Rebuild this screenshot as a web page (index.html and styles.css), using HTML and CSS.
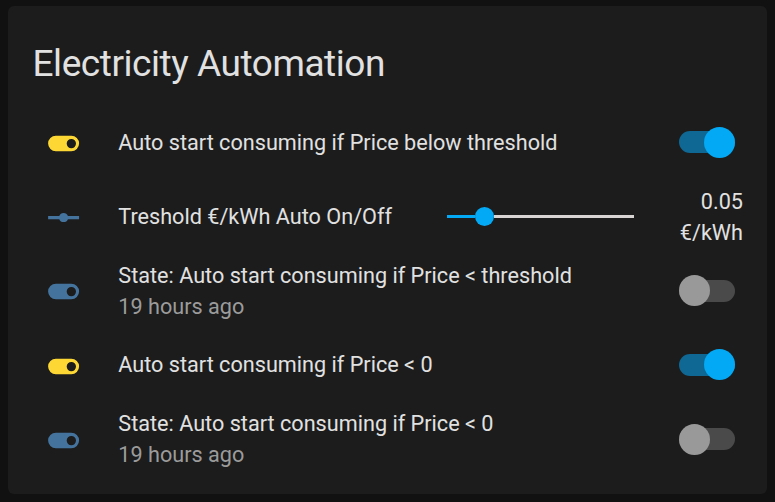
FILE: index.html
```html
<!DOCTYPE html>
<html lang="en">
<head>
<meta charset="utf-8">
<title>Electricity Automation</title>
<link rel="stylesheet" href="styles.css">
</head>
<body>
<svg width="0" height="0" class="defs">
  <symbol id="toggle" viewBox="0 0 24 24"><path d="M17 7H7a5 5 0 0 0 0 10h10a5 5 0 0 0 0-10m0 8a3 3 0 1 1 0-6 3 3 0 0 1 0 6"/></symbol>
  <symbol id="ray" viewBox="0 0 24 24"><path d="M2 11h7.2a3 3 0 0 1 5.6 0H22v2h-7.2a3 3 0 0 1-5.6 0H2z"/></symbol>
</svg>
<main class="card">
  <h1 class="title">Electricity Automation</h1>
  <div class="rows">
    <div class="row">
      <svg class="icon on"><use href="#toggle"/></svg>
      <div class="name">Auto start consuming if Price below threshold</div>
      <div class="switch on"><i class="knob"></i></div>
    </div>
    <div class="row">
      <svg class="icon"><use href="#ray"/></svg>
      <div class="name">Treshold €/kWh Auto On/Off</div>
      <div class="slider"><i class="fill"></i><i class="thumb"></i><i class="rest"></i></div>
      <div class="value">0.05<br>€/kWh</div>
    </div>
    <div class="row">
      <svg class="icon"><use href="#toggle"/></svg>
      <div class="name">State: Auto start consuming if Price &lt; threshold<div class="ago">19 hours ago</div></div>
      <div class="switch"><i class="knob"></i></div>
    </div>
    <div class="row">
      <svg class="icon on"><use href="#toggle"/></svg>
      <div class="name">Auto start consuming if Price &lt; 0</div>
      <div class="switch on"><i class="knob"></i></div>
    </div>
    <div class="row">
      <svg class="icon"><use href="#toggle"/></svg>
      <div class="name">State: Auto start consuming if Price &lt; 0<div class="ago">19 hours ago</div></div>
      <div class="switch"><i class="knob"></i></div>
    </div>
  </div>
</main>
</body>
</html>
```
FILE: styles.css
```css
* { box-sizing: border-box; }
body {
  margin: 0;
  height: 502px;
  padding: 6px 8px 8px;
  background: #111;
  color: #e1e1e1;
  font: 21.65px/31px Roboto, sans-serif;
  overflow: hidden;
}
.defs { display: block; }
.card {
  height: 488px;
  padding: 0 24px 0 25px;
  background: #1c1c1c;
  border-radius: 6px;
}
.title {
  margin: 0 0 0 -0.5px;
  height: 99.25px;
  padding-top: 33px;
  font-size: 37px;
  font-weight: 400;
  line-height: 50px;
  letter-spacing: -0.012em;
}
.row {
  display: flex;
  align-items: center;
  height: 74.2px;
}
.icon {
  flex: none;
  width: 37.2px;
  height: 37.2px;
  margin: 2.5px 36.3px 0 11.8px;
  fill: #44739e;
}
.icon.on { fill: #fdd835; }
.name { flex: 1; white-space: nowrap; }
.ago { color: #9b9b9b; }
.switch {
  display: flex;
  align-items: center;
  width: 56px;
  height: 22px;
  margin-right: 8px;
  border-radius: 11px;
  background: #4a4a4a;
}
.switch.on { justify-content: flex-end; background: #0f6894; }
.knob {
  flex: none;
  width: 31px;
  height: 31px;
  border-radius: 50%;
  background: #999;
}
.switch.on .knob { background: #03a9f4; }
.slider {
  display: flex;
  align-items: center;
  width: 187px;
}
.fill { width: 28px; height: 3px; background: #03a9f4; }
.thumb { width: 19px; height: 19px; border-radius: 50%; background: #03a9f4; }
.rest { flex: 1; height: 3px; background: #d8d4d3; }
.value { width: 109px; text-align: right; }
```
